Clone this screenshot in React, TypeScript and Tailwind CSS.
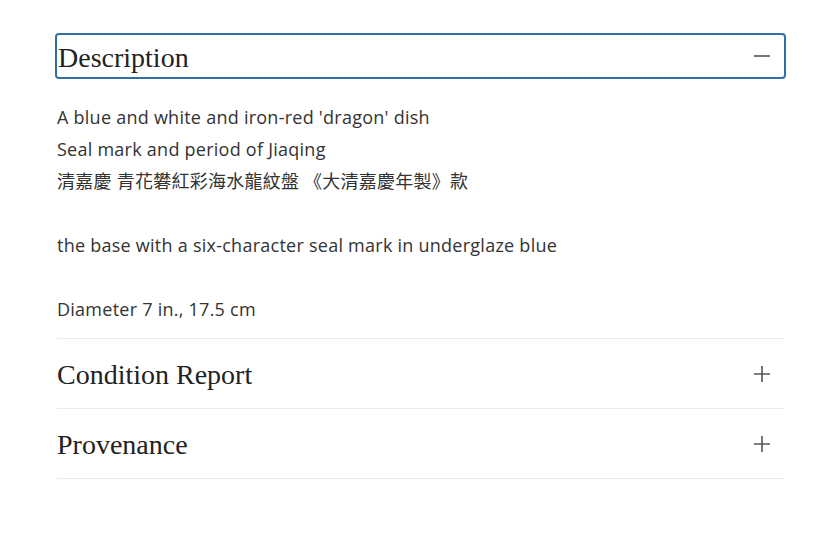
import { useState } from "react";

type Section = { key: string; title: string };

const sections: Section[] = [
  { key: "condition", title: "Condition Report" },
  { key: "provenance", title: "Provenance" },
];

const serif = "font-['Liberation_Serif',serif]";
const sans = "font-['Open_Sans','Noto_Sans_CJK_TC',sans-serif]";

function Minus() {
  return (
    <svg width="18" height="18" viewBox="0 0 18 18" className="shrink-0">
      <path d="M1 9h16" stroke="#555" strokeWidth="1.6" />
    </svg>
  );
}

function Plus() {
  return (
    <svg width="18" height="18" viewBox="0 0 18 18" className="shrink-0">
      <path d="M1 9h16M9 1v16" stroke="#555" strokeWidth="1.6" />
    </svg>
  );
}

export default function App() {
  const [open, setOpen] = useState(true);

  return (
    <div className="min-h-[534px] w-[828px] bg-white pt-[35px] pl-[57px]">
      <div className="w-[727px]">
        <div className="border-b border-[#ebebeb]">
          <button
            onClick={() => setOpen(!open)}
            className="flex h-[42px] w-full items-center justify-between rounded-[2px] pl-[1px] pr-[13px] outline-2 outline-[#2f6fa6] text-left"
          >
            <span className={`${serif} pt-[3px] text-[28px] leading-none text-[#222]`}>Description</span>
            <Minus />
          </button>
          {open && (
            <div className={`${sans} pt-[24px] pb-[13px] text-[18px] leading-[32px] tracking-[0.25px] text-[#333]`}>
              <p>A blue and white and iron-red 'dragon' dish</p>
              <p>Seal mark and period of Jiaqing</p>
              <p>清嘉慶 青花礬紅彩海水龍紋盤 《大清嘉慶年製》款</p>
              <p>&nbsp;</p>
              <p>the base with a six-character seal mark in underglaze blue</p>
              <p>&nbsp;</p>
              <p>Diameter 7 in., 17.5 cm</p>
            </div>
          )}
        </div>
        {sections.map((s) => (
          <div key={s.key} className="border-b border-[#ebebeb]">
            <button className="flex h-[69px] w-full items-center justify-between pr-[13px] text-left">
              <span className={`${serif} pt-[3px] text-[28px] leading-none text-[#222]`}>{s.title}</span>
              <Plus />
            </button>
          </div>
        ))}
      </div>
    </div>
  );
}
